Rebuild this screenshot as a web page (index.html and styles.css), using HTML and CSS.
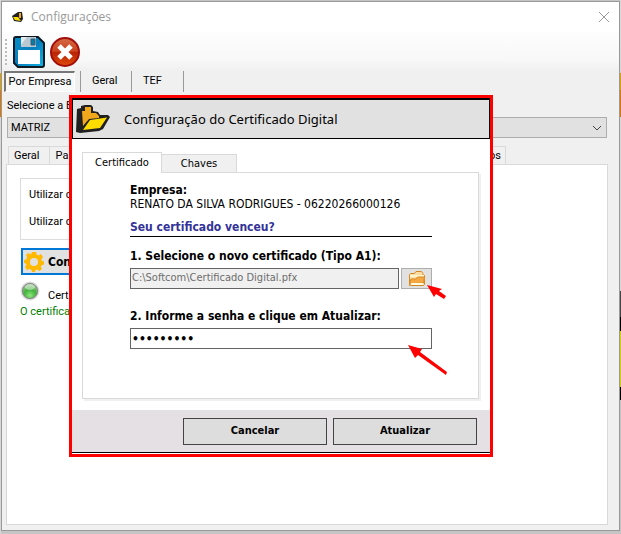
FILE: index.html
```html
<!DOCTYPE html>
<html lang="pt-BR">
<head>
<meta charset="utf-8">
<meta name="viewport" content="width=device-width, initial-scale=1">
<title>Configurações</title>
<link rel="stylesheet" href="styles.css">
</head>
<body>
<svg class="defs" aria-hidden="true">
  <symbol id="folder" viewBox="0 0 34 30">
    <path d="M1 5 5 4V2l4-1h6l2 2v4l5 1 2 3h8l2 2-7 12-4 2-19 2-4-1Z" fill="#202020"/>
    <path d="M6 7h3V3h6v6h5l3 3v2l-10 1-6 7Z" fill="#f2a81d"/>
    <path d="M14 16 31 13.500 24 24 7 26Z" fill="#ffdc00"/>
  </symbol>
  <symbol id="folder-small" viewBox="0 0 12 12">
    <path d="M0 5 6 1h4l1 7-2 3-7-1Z" fill="#202020"/>
    <path d="M7 2h2v5H7Z" fill="#f2a81d"/>
    <path d="M1 6h5l3 4-6-1Z" fill="#ffdc00"/>
  </symbol>
</svg>
<main class="window">
  <header class="titlebar">
    <svg class="app-icon" viewBox="0 0 12 12" aria-hidden="true"><use href="#folder-small"/></svg>
    <h1>Configurações</h1>
    <button class="close" aria-label="Fechar"><svg viewBox="0 0 12 12"><path d="M1 1 11 11M11 1 1 11"/></svg></button>
  </header>
  <div class="toolbar">
    <span class="grip"></span>
    <button aria-label="Salvar">
      <svg viewBox="0 0 32 32">
        <defs><linearGradient id="blue" x1="0" y1="0" x2="1" y2="1"><stop stop-color="#078dc6"/><stop offset=".5" stop-color="#087ebd"/><stop offset="1" stop-color="#12b5e8"/></linearGradient></defs>
        <path d="M3 1h22l6 6v22q0 2-2 2H5l-4-4V3q0-2 2-2Z" fill="url(#blue)" stroke="#101a22" stroke-width="2"/>
        <path d="M8 1h15v10H8Z" fill="#b9c8d1"/><path d="M8 1h6l-6 8Z" fill="#e4eaed"/>
        <path d="M18 3h4v6h-4Z" fill="#087ba8" stroke="#385d70"/>
        <path d="M5 14h22v14H5Z" fill="#fff"/>
      </svg>
    </button>
    <button aria-label="Cancelar alterações">
      <svg viewBox="0 0 32 32">
        <defs><linearGradient id="red" x1="0" y1="0" x2="0" y2="1"><stop stop-color="#d66b47"/><stop offset=".48" stop-color="#c9411b"/><stop offset=".5" stop-color="#b92306"/><stop offset="1" stop-color="#de4a08"/></linearGradient></defs>
        <circle cx="16" cy="16" r="14" fill="url(#red)" stroke="#a30d0b" stroke-width="2"/>
        <path d="m10 10 12 12M22 10 10 22" stroke="#fff" stroke-width="5"/>
      </svg>
    </button>
  </div>
  <nav class="main-tabs">
    <button class="selected">Por Empresa</button><button>Geral</button><button>TEF</button>
  </nav>
  <section class="company">
    <label for="company">Selecione a E</label>
    <select id="company"><option>MATRIZ</option></select>
  </section>
  <nav class="sub-tabs"><button>Geral</button><button class="long">Pa</button><button class="last">os</button></nav>
  <section class="page">
    <div class="group"><span>Utilizar c</span><span>Utilizar c</span></div>
    <button class="configure">
      <svg viewBox="0 0 20 20" aria-hidden="true"><path d="M8 0h4l.6 2.600 2 .8L17 2l2 3-1.600 2.200.6 1.800 2 .5v3l-2.400.7-.8 1.800L18 17l-2.500 2-2.500-1.500-1.500.5L11 20H8l-.7-2.300-2-.8L3 18l-2-3 1.400-2L1.800 11.500 0 11V8l2.300-.7.8-2L2 3l2.500-2L7 2.500Z"/><circle cx="10" cy="10" r="4"/></svg>
      Con
    </button>
    <div class="status">
      <svg viewBox="0 0 20 20" aria-hidden="true">
        <defs><radialGradient id="led" cx=".5" cy=".8" r=".8"><stop stop-color="#8be97b"/><stop offset=".5" stop-color="#44b23d"/><stop offset="1" stop-color="#a3c99e"/></radialGradient></defs>
        <circle cx="10" cy="10" r="9" fill="#c9c9c9" stroke="#dedede"/><circle cx="10" cy="10" r="7.500" fill="url(#led)" stroke="#858585"/><ellipse cx="10" cy="6" rx="5" ry="3" fill="#fff" opacity=".45"/>
      </svg><span>Cert</span>
    </div>
    <p class="valid">O certifica</p>
  </section>
</main>
<div class="dialog" role="dialog" aria-labelledby="dialog-title">
  <header class="dialog-head">
    <svg viewBox="0 0 34 30" aria-hidden="true"><use href="#folder"/></svg>
    <h2 id="dialog-title">Configuração do Certificado Digital</h2>
  </header>
  <div class="dialog-body">
    <nav class="dialog-tabs"><button class="selected">Certificado</button><button>Chaves</button></nav>
    <form class="form">
      <strong>Empresa:</strong>
      <span>RENATO DA SILVA RODRIGUES - 06220266000126</span>
      <h3>Seu certificado venceu?</h3>
      <label for="file">1. Selecione o novo certificado (Tipo A1):</label>
      <div class="file-row">
        <input id="file" class="file" type="text" readonly value="C:\Softcom\Certificado Digital.pfx">
        <button type="button" class="browse" aria-label="Procurar">
          <svg viewBox="0 0 18 16"><path d="M1.500 14.500v-11l1-1h4l1.500-2h5.500l1.500 2v2h1.500v9l-1 1h-13Z" fill="#ffdda0" stroke="#d18722"/><path d="M2 5h14" stroke="#fff3cd" stroke-width="2"/><path d="M3 8h5l1.500-2h7l-1 6-14 1Z" fill="#f5a742" stroke="#dc8b25"/><path d="M3 13h12" stroke="#fffbe5" stroke-width="2"/></svg>
        </button>
      </div>
      <label for="password">2. Informe a senha e clique em Atualizar:</label>
      <input id="password" class="password" type="password" value="123456789">
    </form>
  </div>
  <footer><button>Cancelar</button><button>Atualizar</button></footer>
  <svg class="arrow arrow-file" viewBox="0 0 20 14" aria-hidden="true"><path d="M0 0 15 4l-3 2 7 5-2 3-8-5-2 3Z"/></svg>
  <svg class="arrow arrow-password" viewBox="0 0 40 30" aria-hidden="true"><path d="M0 0 14 4l-2 3 27 20-1 3L10 10l-3 3Z"/></svg>
</div>
</body>
</html>
```
FILE: styles.css
```css
* { box-sizing: border-box; }
body {
  margin: 0;
  height: 100vh;
  padding: 1px 1px 3px;
  overflow: hidden;
  position: relative;
  font: 12px/14px "DejaVu Sans Condensed", "DejaVu Sans", sans-serif;
  color: #000;
  background:
    linear-gradient(#d8d8d8 0 73px, #e0a000 73px 90px, #df7600 90px 117px, #d8d8d8 117px 291px, #444 291px 317px, #000 317px 331px, #d5d000 331px 387px, #000 387px 400px, #c5c5c5 400px) right / 1px 100% no-repeat,
    linear-gradient(#d8d8d8 0 73px, #e0a000 73px 90px, #df7600 90px 117px, #d8d8d8 117px) left / 1px 100% no-repeat,
    #c5c5c5;
}
button, input, select { font: inherit; color: inherit; margin: 0; border-radius: 0; }
button { padding: 0; border: 0; background: none; white-space: nowrap; }
h1, h2, h3, p { margin: 0; font-weight: normal; }
svg { display: block; }
.defs { display: none; }
.window {
  height: 100%;
  border: 1px solid #999;
  background: #f0f0f0;
  display: flex;
  flex-direction: column;
  font: 11px/14px Roboto, "Liberation Sans", sans-serif;
}
.titlebar { height: 30px; flex: none; background: #fff; display: flex; align-items: center; padding: 0 9px 0 10px; }
.app-icon { width: 12px; height: 12px; }
.titlebar h1 { flex: 1; margin-left: 7px; font: 12px/16px "Open Sans", "Noto Sans", sans-serif; color: #999; }
.close svg { width: 12px; height: 12px; stroke: #999; fill: none; }
.toolbar { height: 39px; flex: none; display: flex; align-items: center; gap: 4px; padding-left: 3px; background: linear-gradient(#fdfdfd, #f8f8f8 70%, #f0f0f0); }
.toolbar svg { width: 32px; height: 32px; }
.grip { width: 2px; height: 26px; margin-right: 2px; background: repeating-linear-gradient(#bbb 0 2px, transparent 2px 4px); }
.main-tabs { height: 21px; flex: none; display: flex; padding-left: 2px; }
.main-tabs button { width: 52px; padding: 0 0 2px 11px; border-right: 1px solid #999; text-align: left; }
.main-tabs button.selected { width: 71px; padding: 0; margin-right: 5px; border: 1px solid #777; border-width: 2px 1px 1px 2px; border-right-color: #fff; border-bottom-color: #fff; background: #f8f8f8; text-align: center; }
.main-tabs button.selected + button { border-left: 1px solid #999; }
.company { padding: 7px 12px 0 5px; display: flex; flex-direction: column; gap: 4px; flex: none; }
select { appearance: none; height: 21px; width: 100%; padding: 0 3px; border: 1px solid #adadad; background: #e1e1e1 url("data:image/svg+xml,%3Csvg xmlns='http://www.w3.org/2000/svg' viewBox='0 0 10 6'%3E%3Cpath d='M1 1 5 5 9 1' fill='none' stroke='%23444'/%3E%3C/svg%3E") no-repeat right 4px center / 10px 6px; }
.sub-tabs { height: 18px; flex: none; margin-top: 8px; padding: 0 113px 0 6px; display: flex; }
.sub-tabs button { padding: 0 9px 0 5px; border: 1px solid #d9d9d9; border-bottom: 0; background: #f0f0f0; text-align: left; }
.sub-tabs .long { flex: 1; padding-left: 6px; border-width: 1px 0 0; }
.sub-tabs .last { padding: 0 4px; border-left: 0; }
.page { flex: 1; min-height: 0; margin: 0 11px 5px 4px; padding: 13px; border: 1px solid #d9d9d9; background: #fff; }
.group, .configure { width: 70%; }
.group { height: 62px; padding: 9px 8px; border: 1px solid #dcdcdc; display: flex; flex-direction: column; gap: 13px; }
.configure { display: flex; align-items: center; gap: 4px; height: 27px; margin: 8px 0 0 1px; padding-left: 1px; border: 2px solid #0078d7; background: #e1e1e1; font: bold 12px/14px "DejaVu Sans Condensed", sans-serif; }
.configure svg { width: 20px; height: 20px; fill: #ffb900; }
.configure circle { fill: #e1e1e1; }
.status { display: flex; align-items: flex-end; gap: 8px; margin-top: 6px; }
.status svg { width: 20px; height: 20px; }
.status span { line-height: 10px; }
.valid { margin-top: 4px; color: #008000; }
.dialog { position: absolute; left: 69px; right: 128px; top: 95px; border: 3px solid #f00; background: #fff; padding-bottom: 1px; }
.dialog-head { height: 41px; border: 1px solid #000; border-width: 2px 1px 1px; background: #e1e1e1; display: flex; align-items: center; gap: 14px; padding-left: 3px; }
.dialog-head svg { width: 34px; height: 30px; }
.dialog-head h2 { font: 13px/18px "Noto Sans", sans-serif; }
.dialog-body { padding: 13px 11px 11px 10px; }
.dialog-tabs { height: 21px; display: flex; align-items: flex-end; font-size: 11px; }
.dialog-tabs button { width: 75px; height: 19px; border: 1px solid #d9d9d9; border-left: 0; background: #f0f0f0; }
.dialog-tabs .selected { width: 80px; height: 21px; border: 1px solid #d9d9d9; border-bottom: 0; background: #fff; z-index: 1; }
.form { height: 227px; margin-top: -1px; padding: 10px 46px 0 47px; border: 1px solid #d9d9d9; box-shadow: 2px 2px #f0f0f0; display: flex; flex-direction: column; }
.form > span { white-space: nowrap; }
.form h3 { margin: 9px 0 12px; padding-bottom: 2px; border-bottom: 1px solid #000; color: #333399; font-size: 12px; font-weight: bold; }
.form label { font-weight: bold; margin-bottom: 5px; white-space: nowrap; }
.form input { height: 21px; border: 1px solid #646464; padding: 0 1px; background: #fff; outline: 0; }
.file-row { display: flex; gap: 2px; margin-bottom: 20px; }
.form .file { flex: 1; min-width: 0; background: #f0f0f0; color: #6d6d6d; font-size: 11px; padding-bottom: 3px; }
.form .password { font-size: 12px; font-weight: bold; }
.browse { width: 31px; height: 21px; border: 1px solid #adadad; background: #e1e1e1; display: grid; place-items: center; }
.browse svg { width: 18px; height: 16px; }
.dialog footer { height: 43px; padding: 0 13px; border-bottom: 1px solid #000; background: #e5e0e4; display: flex; align-items: center; justify-content: flex-end; gap: 6px; }
.dialog footer button { width: 144px; height: 27px; border: 1px solid #444; background: #ddd; font-size: 11px; font-weight: bold; }
.arrow { position: absolute; fill: #f00; }
.arrow-file { width: 20px; height: 14px; left: 355px; top: 187px; }
.arrow-password { width: 40px; height: 30px; left: 336px; top: 247px; }
```
